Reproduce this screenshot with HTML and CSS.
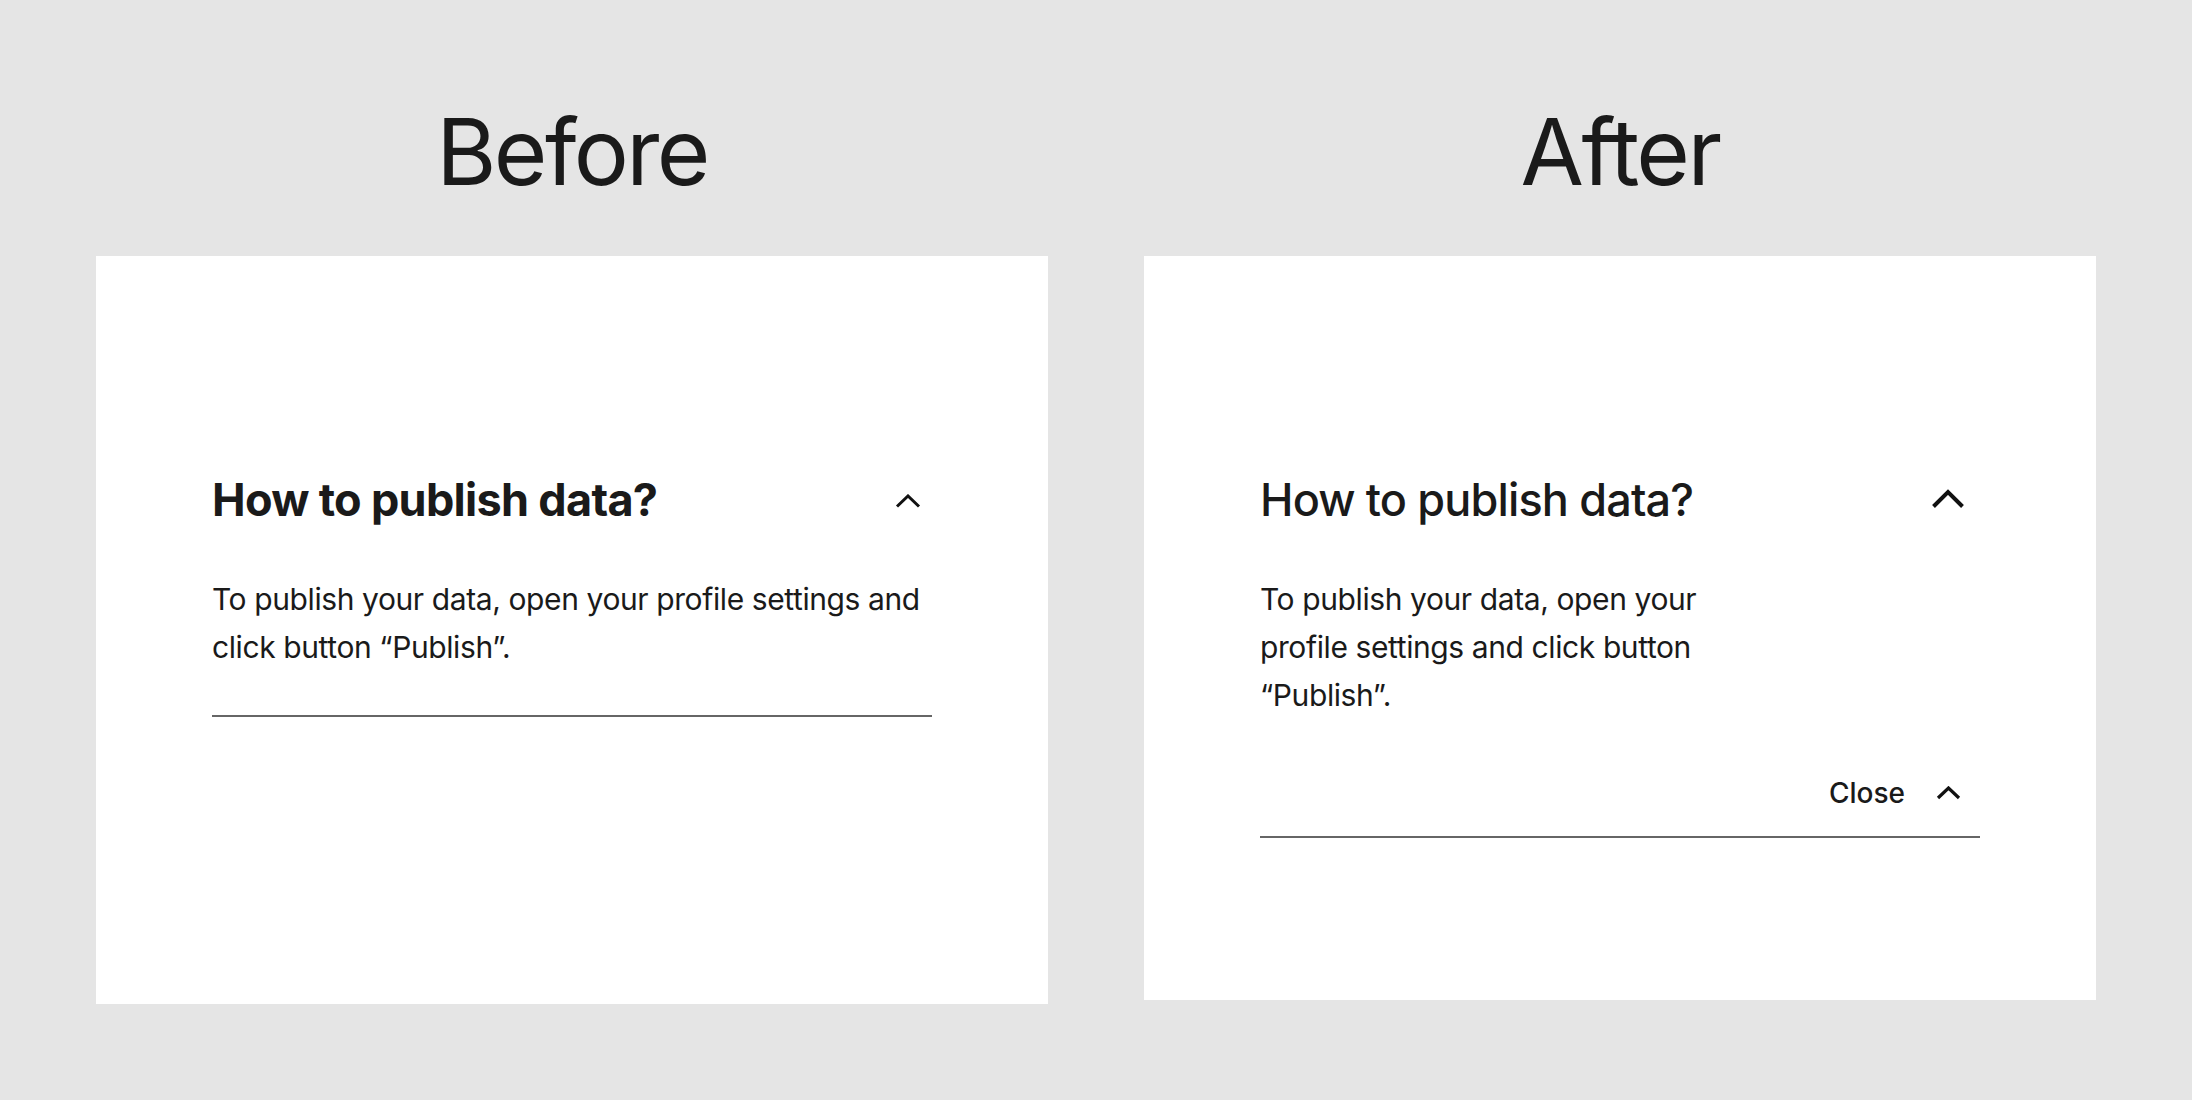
FILE: index.html
```html
<!DOCTYPE html>
<html lang="en">
<head>
<meta charset="utf-8">
<title>Before / After</title>
<link rel="stylesheet" href="styles.css">
</head>
<body>
<main class="page">
  <section class="col">
    <h1 class="title">Before</h1>
    <div class="card card--before">
      <div class="acc-head">
        <h2 class="acc-title acc-title--bold">How to publish data?</h2>
        <svg class="chev chev--small" width="26" height="14" viewBox="0 0 26 14"><path d="M2 12.5 L13 2 L24 12.5" fill="none" stroke="#111" stroke-width="3"/></svg>
      </div>
      <p class="acc-body">To publish your data, open your profile settings and click button “Publish”.</p>
      <div class="divider divider--before"></div>
    </div>
  </section>
  <section class="col">
    <h1 class="title">After</h1>
    <div class="card card--after">
      <div class="acc-head">
        <h2 class="acc-title acc-title--medium">How to publish data?</h2>
        <svg class="chev chev--big" width="34" height="21" viewBox="0 0 34 21"><path d="M2.5 18.5 L17 4 L31.5 18.5" fill="none" stroke="#111" stroke-width="4"/></svg>
      </div>
      <p class="acc-body acc-body--narrow">To publish your data, open your profile settings and click button “Publish”.</p>
      <div class="close-row">
        <span class="close-label">Close</span>
        <svg class="chev chev--close" width="25" height="14" viewBox="0 0 25 14"><path d="M2 12 L12.5 2 L23 12" fill="none" stroke="#111" stroke-width="3.2"/></svg>
      </div>
      <div class="divider divider--after"></div>
    </div>
  </section>
</main>
</body>
</html>
```

FILE: styles.css
```css
* { box-sizing: border-box; }
html, body { margin: 0; padding: 0; }
body {
  background: #e5e5e5;
  color: #1a1a1a;
  font-family: Inter, "Liberation Sans", sans-serif;
  width: 2192px;
  height: 1100px;
  overflow: hidden;
}
.page {
  display: flex;
  gap: 96px;
  padding: 0 96px;
}
.col {
  width: 952px;
  display: flex;
  flex-direction: column;
}
.title {
  margin: 0;
  height: 256px;
  padding-top: 106px;
  font-size: 92px;
  line-height: 92px;
  font-weight: 400;
  letter-spacing: -2.6px;
  text-align: center;
}
.card {
  background: #fff;
  padding: 217px 116px 0;
}
.card--before { height: 748px; }
.card--after { height: 744px; }
.acc-head {
  display: flex;
  justify-content: space-between;
  align-items: center;
  height: 54px;
}
.acc-title {
  margin: 0;
  font-size: 45px;
  line-height: 54px;
}
.acc-title--bold { font-weight: 700; letter-spacing: -0.7px; }
.acc-title--medium { font-weight: 500; letter-spacing: -0.85px; }
.chev { display: block; }
.chev--small { margin-right: 11px; margin-top: 2px; }
.chev--big { margin-right: 15px; margin-bottom: 4px; }
.acc-body {
  margin: 48px 0 0;
  font-size: 30px;
  line-height: 48px;
  letter-spacing: -0.4px;
}
.acc-body--narrow { max-width: 450px; }
.divider {
  height: 2px;
  background: #666;
}
.divider--before { margin-top: 44px; }
.divider--after { margin-top: 23px; }
.close-row {
  margin-top: 54px;
  height: 40px;
  display: flex;
  justify-content: flex-end;
  align-items: center;
  gap: 31px;
  padding-right: 19px;
}
.close-label {
  font-size: 28px;
  line-height: 40px;
  font-weight: 500;
  letter-spacing: 0;
}
```
